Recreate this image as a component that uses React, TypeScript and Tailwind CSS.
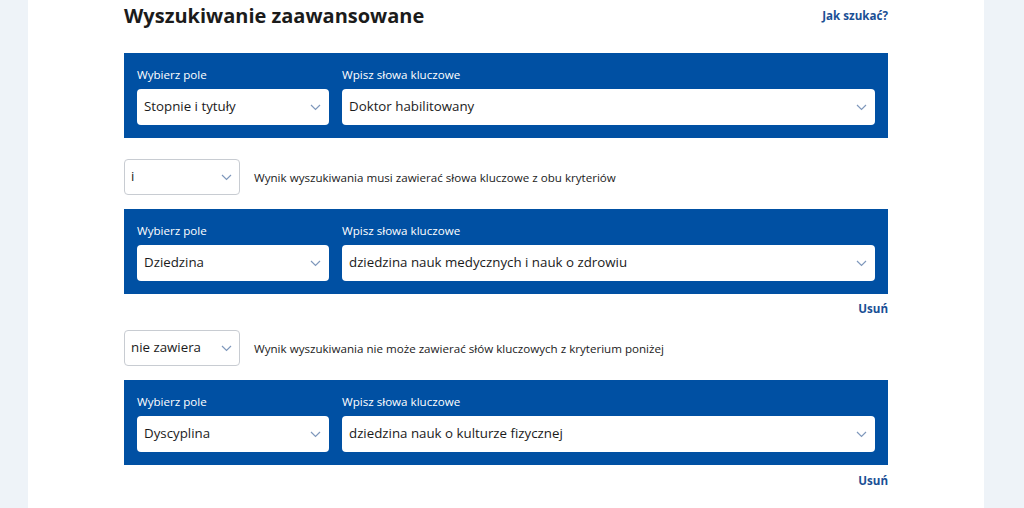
import React from "react";

const Chevron = () => (
  <svg width="11" height="7" viewBox="0 0 11 7" fill="none" className="shrink-0">
    <path d="M1 1l4.5 4.5L10 1" stroke="#7f98bc" strokeWidth="1.2" />
  </svg>
);

const FieldBox = ({ value, className }: { value: string; className: string }) => (
  <div
    className={`h-[36px] bg-white rounded-[4px] flex items-center justify-between pl-[7px] pr-[8px] text-[13.3px] text-[#1b1b1b] ${className}`}
  >
    <span>{value}</span>
    <Chevron />
  </div>
);

const Criterion = ({ field, keyword }: { field: string; keyword: string }) => (
  <div className="bg-[#0050a3] px-[13px] pt-[14px] pb-[13px] flex gap-[13px]">
    <div className="w-[192px]">
      <div className="text-[11.6px] leading-[16px] text-white mb-[6px]">Wybierz pole</div>
      <FieldBox value={field} className="w-full" />
    </div>
    <div className="flex-1">
      <div className="text-[11.6px] leading-[16px] text-white mb-[6px]">Wpisz słowa kluczowe</div>
      <FieldBox value={keyword} className="w-full" />
    </div>
  </div>
);

const Operator = ({ value, hint }: { value: string; hint: string }) => (
  <div className="flex items-center">
    <div className="w-[116px] h-[36px] border border-[#c8ccd2] rounded-[4px] flex items-center justify-between pl-[6px] pr-[7px] text-[13.3px] text-[#1b1b1b]">
      <span>{value}</span>
      <Chevron />
    </div>
    <span className="ml-[14px] mt-[1px] text-[11.6px] text-[#1b1b1b]">{hint}</span>
  </div>
);

const Remove = ({ className }: { className: string }) => (
  <div className={`flex justify-end ${className}`}>
    <span className="text-[11.6px] leading-[16px] font-bold text-[#1a4f95]">Usuń</span>
  </div>
);

export default function App() {
  return (
    <div
      className="flex w-[1024px] h-[508px] overflow-hidden bg-[#eef3f8]"
      style={{ fontFamily: '"Open Sans", sans-serif' }}
    >
      <div className="w-[28px] shrink-0" />
      <main className="w-[956px] bg-white pl-[96px]">
        <div className="w-[764px]">
          <div className="flex items-center justify-between h-[32px]">
            <h1 className="text-[20px] font-bold text-[#1b1b1b] leading-[28px]">
              Wyszukiwanie zaawansowane
            </h1>
            <a className="text-[11.6px] font-bold text-[#1a4f95]">Jak szukać?</a>
          </div>
          <div className="mt-[21px]">
            <Criterion field="Stopnie i tytuły" keyword="Doktor habilitowany" />
          </div>
          <div className="mt-[21px]">
            <Operator value="i" hint="Wynik wyszukiwania musi zawierać słowa kluczowe z obu kryteriów" />
          </div>
          <div className="mt-[14px]">
            <Criterion field="Dziedzina" keyword="dziedzina nauk medycznych i nauk o zdrowiu" />
          </div>
          <Remove className="mt-[7px]" />
          <div className="mt-[13px]">
            <Operator
              value="nie zawiera"
              hint="Wynik wyszukiwania nie może zawierać słów kluczowych z kryterium poniżej"
            />
          </div>
          <div className="mt-[14px]">
            <Criterion field="Dyscyplina" keyword="dziedzina nauk o kulturze fizycznej" />
          </div>
          <Remove className="mt-[8px]" />
        </div>
      </main>
    </div>
  );
}
